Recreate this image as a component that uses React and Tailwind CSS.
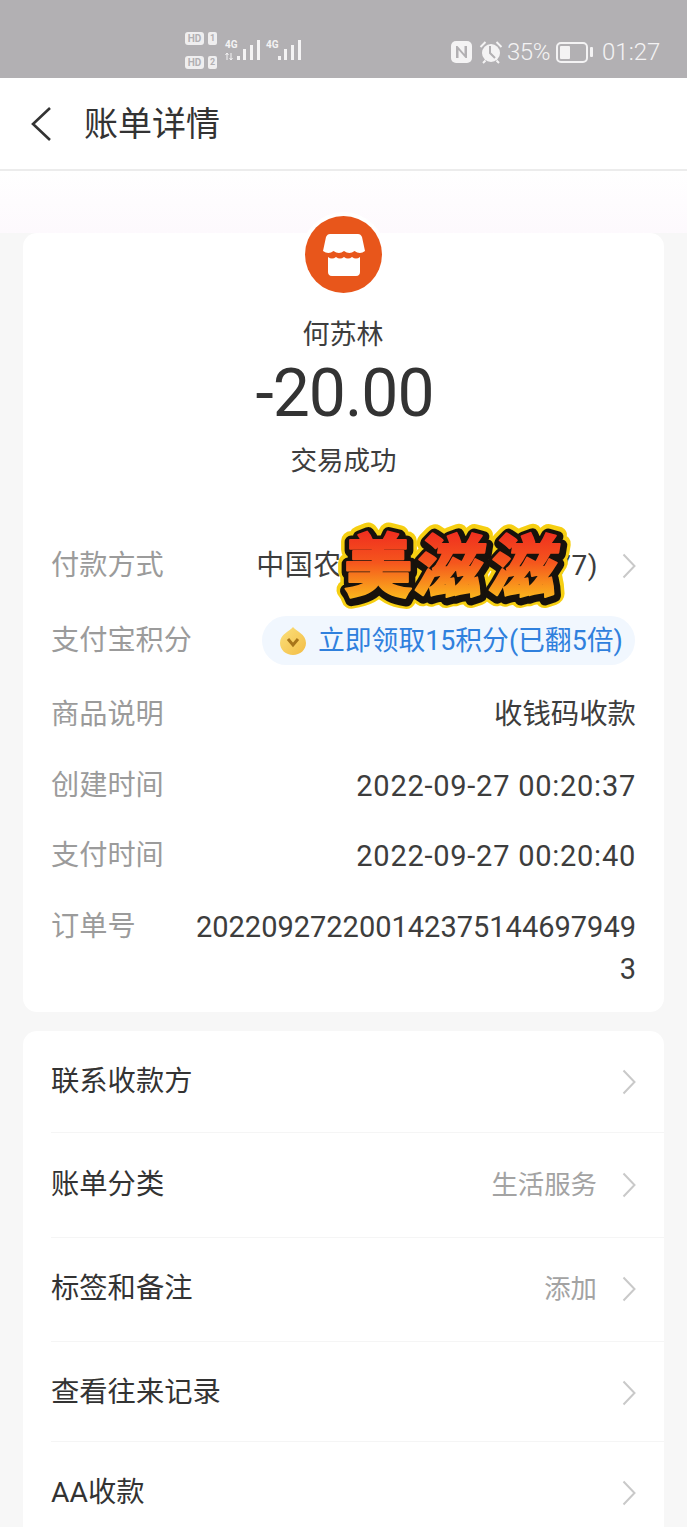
const font = { cjk: "font-['Roboto','Noto_Sans_CJK_SC',sans-serif]" };

const details = [
  { label: '商品说明', value: '收钱码收款', top: 'mt-[29px]' },
  { label: '创建时间', value: '2022-09-27 00:20:37', top: 'mt-[29px]', num: true },
  { label: '支付时间', value: '2022-09-27 00:20:40', top: 'mt-[28px]', num: true },
];

const actions = [
  { label: '联系收款方', value: '', h: 'h-[102px]' },
  { label: '账单分类', value: '生活服务', h: 'h-[105px] pb-[1px]' },
  { label: '标签和备注', value: '添加', h: 'h-[104px] pb-[2px]' },
  { label: '查看往来记录', value: '', h: 'h-[100px] pt-[3px]' },
  { label: 'AA收款', value: '', h: 'h-[100px] pt-[2px]' },
];

function Chevron({ className = '' }) {
  return (
    <svg width="14" height="26" viewBox="0 0 14 26" fill="none" className={`shrink-0 ${className}`}>
      <path d="M1.5 1.5L12.5 13L1.5 24.5" stroke="#c9c9c9" strokeWidth="2" />
    </svg>
  );
}

function Signal({ arrows }) {
  return (
    <svg width="36" height="22" viewBox="0 0 36 22" fill="#f4f3f4">
      {arrows && <path d="M2 14v7M0.5 16l1.5-2 1.5 2M6 14v7M4.5 19l1.5 2 1.5-2" stroke="#f4f3f4" fill="none" strokeWidth="1" />}
      <rect x="12" y="17" width="3" height="4" />
      <rect x="18" y="10" width="3" height="11" />
      <rect x="25" y="6" width="3" height="15" />
      <rect x="32" y="1" width="3" height="20" />
    </svg>
  );
}

function StatusBar() {
  return (
    <div className="h-[78px] bg-[#b2b0b3] flex items-start text-[#f4f3f4] font-['Roboto',sans-serif]">
      {/* sim badges */}
      <div className="ml-[185px] mt-[32px] flex flex-col gap-[11px] w-[40px]">
        {['1', '2'].map((n) => (
          <div key={n} className="flex gap-[4px] items-center">
            <span className="w-[19px] h-[13px] bg-[#efeeef] rounded-[3px] text-[#b2b0b3] text-[10px] font-bold leading-[13px] text-center">HD</span>
            <span className="w-[9px] h-[13px] bg-[#efeeef] rounded-[2px] text-[#b2b0b3] text-[9px] font-bold leading-[13px] text-center">{n}</span>
          </div>
        ))}
      </div>
      <div className="mt-[39px] w-[41px] relative h-[22px]">
        <span className="absolute left-0 top-0 text-[10px] font-bold leading-[11px]">4G</span>
        <Signal arrows />
      </div>
      <div className="mt-[39px] w-[36px] relative h-[22px]">
        <span className="absolute left-0 top-0 text-[10px] font-bold leading-[11px]">4G</span>
        <Signal />
      </div>
      {/* right side */}
      <div className="ml-[149px] mt-[38px] flex items-center h-[28px]">
        <svg width="21" height="22" viewBox="0 0 21 22" className="mr-[7px]">
          <rect width="21" height="22" rx="5" fill="#f4f3f4" />
          <path d="M5 5v12h2.5V9l7 8H16V5h-2.5v8l-7-8z" fill="#b2b0b3" />
        </svg>
        <svg width="24" height="24" viewBox="0 0 24 24" className="mr-[4px]">
          <circle cx="12" cy="13" r="9" fill="#f4f3f4" />
          <path d="M11 6v7l5 5" fill="none" stroke="#b2b0b3" strokeWidth="2" />
          <path d="M1.5 7l5-5M22.5 7l-5-5M4 23l2.5-2.5M20 23l-2.5-2.5" stroke="#f4f3f4" strokeWidth="2" />
        </svg>
        <span className="text-[24px] leading-[28px] font-light w-[44px] tracking-[-0.5px]">35%</span>
        <div className="ml-[5px] w-[32px] h-[21px] border-2 border-[#f4f3f4] rounded-[5px] p-[2px] flex">
          <div className="w-[10px] bg-[#f4f3f4] rounded-[1px]" />
        </div>
        <div className="ml-[2px] w-[3px] h-[10px] bg-[#f4f3f4] rounded-[1px]" />
        <span className="ml-[9px] text-[24px] leading-[28px] font-light">01:27</span>
      </div>
    </div>
  );
}

// Sticker drawn over the payment row; strokes need round joins so it is svg text
function Sticker() {
  const chars = [
    { c: '美', x: 35, t: '' },
    { c: '滋', x: 104, t: 'skewX(-9)' },
    { c: '滋', x: 178, t: 'skewX(-9)' },
  ];
  const layers = [
    { stroke: '#f6cf12', width: 20, fill: '#f6cf12', dx: 1, dy: 1 },
    { stroke: '#17120c', width: 13, fill: '#17120c', dx: 1, dy: 2 },
    { stroke: 'url(#stickerFill)', width: 2, fill: 'url(#stickerFill)', dx: 0, dy: 0 },
  ];
  return (
    <svg width="224" height="82" viewBox="0 0 224 82" className="absolute left-[343px] top-[526px] overflow-visible">
      <defs>
        {/* gradient runs in each glyph's own coordinates, baseline at y=0 */}
        <linearGradient id="stickerFill" gradientUnits="userSpaceOnUse" x1="0" y1="-58" x2="0" y2="8">
          <stop offset="0" stopColor="#f0301f" />
          <stop offset="0.45" stopColor="#f5561d" />
          <stop offset="1" stopColor="#fbb81c" />
        </linearGradient>
      </defs>
      {layers.map((l, i) => (
        <g key={i} transform={`translate(${l.dx} ${l.dy})`}>
          {chars.map((ch, j) => (
            <text
              key={j}
              textAnchor="middle"
              fontFamily="'Noto Sans CJK SC', sans-serif"
              fontWeight="900"
              fontSize="68"
              fill={l.fill}
              stroke={l.stroke}
              strokeWidth={l.width}
              strokeLinejoin="round"
              transform={`translate(${ch.x} 65) ${ch.t}`}
            >
              {ch.c}
            </text>
          ))}
        </g>
      ))}
    </svg>
  );
}

export default function App() {
  return (
    <div className={`relative w-[687px] h-[1527px] overflow-hidden bg-[#f7f7f7] ${font.cjk}`}>
      <StatusBar />

      {/* Title bar */}
      <div className="h-[93px] bg-white border-b-2 border-[#ececec] flex items-center">
        <svg width="22" height="36" viewBox="0 0 22 36" fill="none" className="ml-[30px]">
          <path d="M20 2L3 18L20 34" stroke="#333" strokeWidth="2.6" />
        </svg>
        <span className="ml-[32px] text-[34px] leading-[44px] text-[#333]">账单详情</span>
      </div>

      {/* Pale band behind the card top */}
      <div className="h-[62px] bg-gradient-to-b from-white to-[#fdf9fd]" />

      {/* Bill card */}
      <div className="relative mx-[23px] h-[779px] bg-white rounded-[14px] px-[28px]">
        <div className="absolute left-[278px] top-[-21px] w-[85px] h-[85px] rounded-full bg-white flex items-center justify-center">
          <div className="w-[77px] h-[77px] rounded-full bg-[#e8561b] flex items-center justify-center">
            <svg width="42" height="42" viewBox="0 0 42 42" fill="#fff">
              <path d="M7 0h28c2 0 3 1 4 3l3 14q-5 4-10.500 0q-5 4-10.500 0q-5 4-10.500 0q-5 4-10.500 0L3 3C4 1 5 0 7 0z" />
              <path d="M5 23q4 3 8 0q4 3 8 0q4 3 8 0q4 3 8 0V38c0 2-1 4-4 4H9c-3 0-4-2-4-4z" />
            </svg>
          </div>
        </div>

        <div className="pt-[84px] text-center text-[27px] leading-[36px] text-[#3d3d3d] -ml-[1px]">何苏林</div>
        <div className="text-center font-['Roboto',sans-serif] text-[66px] leading-[76px] tracking-[-1px] text-[#333] mt-[3px] ml-[2px]">-20.00</div>
        <div className="text-center text-[26.5px] leading-[36px] text-[#3d3d3d] mt-[11px]">交易成功</div>

        {/* Payment method */}
        <div className="flex items-center mt-[67px] h-[40px]">
          <span className="text-[28.2px] text-[#9b9b9b] leading-[40px]">付款方式</span>
          <span className="ml-auto text-[28px] tracking-[0.5px] text-[#3d3d3d] leading-[40px] whitespace-nowrap">中国农业银行储蓄卡(7777)</span>
          <Chevron className="ml-[24px]" />
        </div>

        {/* Points pill */}
        <div className="flex items-center mt-[30px] h-[49px]">
          <span className="text-[28.2px] text-[#9b9b9b] leading-[40px]">支付宝积分</span>
          <div className="ml-auto mr-[1px] h-[49px] w-[373px] rounded-full bg-[#f1f7fe] flex items-center pl-[17px]">
            <svg width="28" height="30" viewBox="0 0 28 30">
              <defs>
                <linearGradient id="coin" x1="0" y1="0" x2="1" y2="1">
                  <stop offset="0" stopColor="#fbe07c" />
                  <stop offset="1" stopColor="#f3bd45" />
                </linearGradient>
              </defs>
              <path d="M14 1c3 4 13 7 13 16 0 7-6 12-13 12S1 24 1 17C1 8 11 5 14 1z" fill="url(#coin)" />
              <path d="M9 13l5 6 5-6" fill="none" stroke="#a8751a" strokeWidth="3" />
            </svg>
            <span className="ml-[11px] text-[26.8px] leading-[40px] text-[#2f80dd] whitespace-nowrap">立即领取15积分(已翻5倍)</span>
          </div>
        </div>

        {details.map((d) => (
          <div key={d.label} className={`flex items-center h-[42px] ${d.top}`}>
            <span className="text-[28.2px] text-[#9b9b9b] leading-[40px]">{d.label}</span>
            <span className={`ml-auto text-[#3d3d3d] leading-[40px] ${d.num ? 'text-[29px] tracking-[0.75px]' : 'text-[28.4px]'}`}>{d.value}</span>
          </div>
        ))}

        {/* Order number wraps to two lines */}
        <div className="flex items-start mt-[29px]">
          <span className="text-[28.2px] text-[#9b9b9b] leading-[42px] shrink-0">订单号</span>
          <span className="ml-auto w-[441px] text-right text-[29px] leading-[42px] text-[#3d3d3d] break-all">2022092722001423751446979493</span>
        </div>
      </div>

      {/* Action list */}
      <div className="mx-[23px] mt-[19px] bg-white rounded-[14px] pl-[28px]">
        {actions.map((a, i) => (
          <div key={a.label} className={`flex items-center ${a.h} ${i < actions.length - 1 ? 'border-b border-[#f5f5f5]' : ''}`}>
            <span className="text-[28.3px] leading-[40px] text-[#333]">{a.label}</span>
            {a.value && <span className="ml-auto text-[26.4px] leading-[40px] text-[#a3a3a3]">{a.value}</span>}
            <Chevron className={`${a.value ? 'ml-[25px]' : 'ml-auto'} mr-[28px]`} />
          </div>
        ))}
      </div>

      <Sticker />
    </div>
  );
}
